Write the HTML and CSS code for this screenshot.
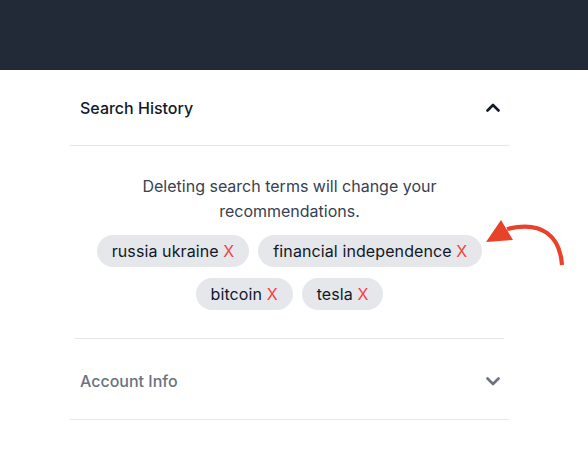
FILE: index.html
```html
<!DOCTYPE html>
<html>
<head>
<meta charset="utf-8">
<link rel="stylesheet" href="styles.css">
</head>
<body>
<header class="topbar"></header>
<main class="main">
  <section class="acc acc-open">
    <div class="acc-head acc-head-open">
      <span class="acc-title">Search History</span>
      <svg class="chev" width="14" height="9" viewBox="0 0 14 9"><path d="M1.5 7.5 L7 2 L12.5 7.5" fill="none" stroke="#111827" stroke-width="2.6" stroke-linecap="round" stroke-linejoin="round"/></svg>
    </div>
    <div class="acc-body">
      <div class="acc-inner">
        <p class="note">Deleting search terms will change your recommendations.</p>
        <div class="chips">
          <span class="chip">russia ukraine <span class="x">X</span></span>
          <span class="chip">financial independence <span class="x">X</span></span>
          <span class="chip">bitcoin <span class="x">X</span></span>
          <span class="chip">tesla <span class="x">X</span></span>
        </div>
      </div>
    </div>
  </section>
  <section class="acc acc-closed">
    <div class="acc-head acc-head-closed">
      <span class="acc-title muted">Account Info</span>
      <svg class="chev" width="14" height="9" viewBox="0 0 14 9"><path d="M1.5 1.5 L7 7 L12.5 1.5" fill="none" stroke="#6b7280" stroke-width="2.6" stroke-linecap="round" stroke-linejoin="round"/></svg>
    </div>
  </section>
  <svg class="arrow" width="90" height="60" viewBox="0 0 90 60">
    <path d="M82 50 C80 22 63 5 27 14" fill="none" stroke="#e8432a" stroke-width="4.2" stroke-linecap="butt"/>
    <polygon points="6,27 21,5 33,25" fill="#e8432a"/>
  </svg>
</main>
</body>
</html>
```
FILE: styles.css
```css
* { box-sizing: border-box; }
body {
  margin: 0;
  background: #ffffff;
  font-family: Inter, "Noto Sans", "Liberation Sans", sans-serif;
  color: #111827;
}
.topbar {
  height: 70px;
  background: #222a38;
}
.main {
  position: relative;
  width: 439px;
  margin-left: 70px;
}
.acc-closed {
  border-bottom: 1px solid #e5e7eb;
}
.acc-head {
  padding: 0 9px 0 10px;
  display: flex;
  align-items: center;
  justify-content: space-between;
}
.acc-head-open {
  height: 76px;
  border-bottom: 1px solid #e5e7eb;
}
.acc-head-closed {
  height: 80px;
  padding-top: 4px;
}
.acc-title {
  font-size: 16px;
  font-weight: 500;
  color: #111827;
}
.acc-title.muted {
  color: #6b7280;
}
.acc-body {
  padding: 0 5px;
}
.acc-inner {
  border-bottom: 1px solid #e5e7eb;
  padding: 28px 0 28px;
}
.note {
  margin: 0 auto 11px;
  width: 330px;
  text-align: center;
  font-size: 16px;
  line-height: 25px;
  color: #374151;
}
.chips {
  display: flex;
  flex-wrap: wrap;
  justify-content: center;
  gap: 11px 9px;
  padding: 0 18px;
}
.chip {
  display: inline-flex;
  align-items: center;
  height: 32px;
  padding: 0 15px;
  border-radius: 16px;
  background: #e5e7eb;
  font-size: 16px;
  letter-spacing: 0.1px;
  color: #111827;
  white-space: pre;
}
.x {
  color: #ef4444;
}
.arrow {
  position: absolute;
  left: 410px;
  top: 145px;
}
```
